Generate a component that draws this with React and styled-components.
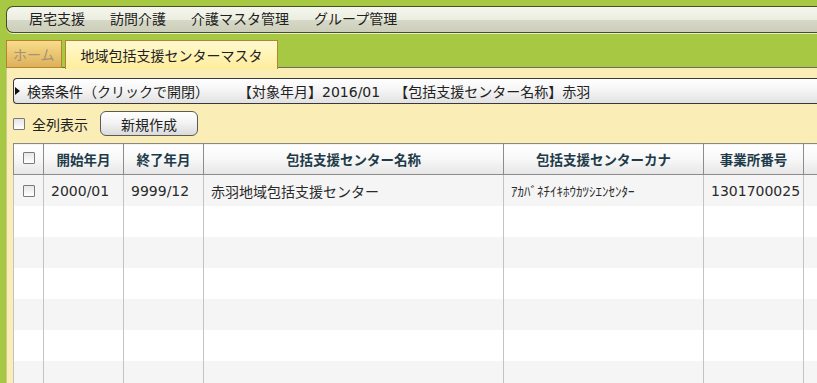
import styled, { createGlobalStyle } from "styled-components";

const GlobalStyle = createGlobalStyle`
  html, body {
    margin: 0;
    padding: 0;
    height: 383px;
    overflow: hidden;
    background: #a6c843;
  }
  body {
    font-family: "DejaVu Sans", "Noto Sans CJK JP", sans-serif;
    font-size: 14px;
    color: #222;
  }
`;

const Page = styled.div`
  width: 850px;
  padding: 6px 0 0 6px;
  display: flex;
  flex-direction: column;
`;

const MenuBar = styled.div`
  display: flex;
  align-items: center;
  height: 25px;
  padding-left: 9px;
  border: 1px solid #45521e;
  border-right: none;
  border-radius: 7px 0 0 7px;
  background: linear-gradient(#f5f6ee 0%, #eceee0 50%, #d7d9c8 52%, #ccceba 100%);
  box-shadow: 0 1px 0 #e8ecd0;
`;

const MenuItem = styled.div`
  padding: 0 12px 0 13px;
  color: #222;
  font-size: 14px;
  line-height: 25px;
`;

const TabRow = styled.div`
  display: flex;
  gap: 3px;
  margin-top: 7px;
  height: 28px;
  position: relative;
  z-index: 1;
`;

const Tab = styled.div`
  display: flex;
  align-items: center;
  padding: 0 ${(p) => (p.$active ? "14px 0 15px" : "6px")};
  border: 1px solid #b4852c;
  border-bottom: ${(p) => (p.$active ? "none" : "1px solid #b4852c")};
  height: ${(p) => (p.$active ? "28px" : "26px")};
  color: ${(p) => (p.$active ? "#222" : "#a39375")};
  background: ${(p) =>
    p.$active
      ? "linear-gradient(#fff9cf, #ffed9c)"
      : "linear-gradient(#f8dc8c, #deb05a)"};
  font-size: 14px;
`;

const Panel = styled.div`
  margin-top: -1px;
  background: #faedb6;
  border-top: 1px solid #6e6e5c;
  border-left: 1px solid #c9c98a;
  padding: 10px 0 0 6px;
  display: flex;
  flex-direction: column;
  gap: 7px;
`;

const SearchBar = styled.div`
  display: flex;
  align-items: center;
  height: 24px;
  padding-left: 1px;
  border: 1px solid #3a3a3a;
  border-right: none;
  border-radius: 4px 0 0 4px;
  background: linear-gradient(#ffffff 0%, #f4f4f4 50%, #e2e2e2 100%);
  font-size: 14px;
  white-space: nowrap;
`;

const Arrow = styled.span`
  display: inline-block;
  width: 0;
  height: 0;
  border-top: 4px solid transparent;
  border-bottom: 4px solid transparent;
  border-left: 5px solid #111;
  margin: 0 7px 0 0;
`;

const Condition = styled.span`
  margin-left: ${(p) => p.$gap || 0}px;
`;

const Toolbar = styled.div`
  display: flex;
  align-items: center;
  height: 25px;
`;

const Check = styled.span`
  display: inline-block;
  box-sizing: border-box;
  width: 12px;
  height: 12px;
  border: 1px solid #7a7a7a;
  background: linear-gradient(#e6e6e6, #ffffff);
  border-radius: 1px;
`;

const CheckLabel = styled.label`
  display: flex;
  align-items: center;
  gap: 7px;
  font-size: 14px;
`;

const Button = styled.div`
  margin-left: 12px;
  width: 96px;
  height: 23px;
  display: flex;
  align-items: center;
  justify-content: center;
  border: 1px solid #5a5a5a;
  border-radius: 6px;
  background: linear-gradient(#ffffff 0%, #f2f2f2 50%, #dadada 100%);
  font-size: 14px;
`;

const Table = styled.table`
  border-collapse: collapse;
  table-layout: fixed;
  width: 830px;
  background: #fff;
  border: 1px solid #888;
  border-right: none;
  border-bottom: none;
`;

const Th = styled.th`
  height: 30px;
  padding: 0;
  border: 1px solid #8c8c8c;
  border-top: none;
  background: linear-gradient(#ffffff 0%, #f7f7f7 50%, #e6e6e6 100%);
  color: #1e3b4a;
  font-weight: bold;
  font-size: 13.5px;
  text-align: center;
`;

const Row = styled.tr`
  background: ${(p) => (p.$odd ? "#ffffff" : "#f5f5f5")};
`;

const Td = styled.td`
  height: 31px;
  padding: 0 0 0 7px;
  border-left: 1px solid #c3c3c3;
  border-right: 1px solid #c3c3c3;
  color: #2a2a2a;
  font-size: ${(p) => (p.$kana ? "13px" : "14px")};
  white-space: nowrap;
  overflow: hidden;
`;

const CheckCell = styled(Td)`
  padding: 0;
  text-align: center;
  line-height: 0;
`;

const columns = [
  { label: "", width: 30 },
  { label: "開始年月", width: 80 },
  { label: "終了年月", width: 80 },
  { label: "包括支援センター名称", width: 300 },
  { label: "包括支援センターカナ", width: 200 },
  { label: "事業所番号", width: 100 },
  { label: "", width: 40 },
];

const rows = [
  ["2000/01", "9999/12", "赤羽地域包括支援センター", "ｱｶﾊﾞﾈﾁｲｷﾎｳｶﾂｼｴﾝｾﾝﾀｰ", "1301700025"],
  null,
  null,
  null,
  null,
  null,
  null,
];

export default function App() {
  return (
    <>
      <GlobalStyle />
      <Page>
        <MenuBar>
          <MenuItem>居宅支援</MenuItem>
          <MenuItem>訪問介護</MenuItem>
          <MenuItem>介護マスタ管理</MenuItem>
          <MenuItem>グループ管理</MenuItem>
        </MenuBar>
        <TabRow>
          <Tab>ホーム</Tab>
          <Tab $active>地域包括支援センターマスタ</Tab>
        </TabRow>
        <Panel>
          <SearchBar>
            <Arrow />
            <Condition>検索条件（クリックで開閉）</Condition>
            <Condition $gap={29}>【対象年月】2016/01</Condition>
            <Condition $gap={14}>【包括支援センター名称】赤羽</Condition>
          </SearchBar>
          <Toolbar>
            <CheckLabel>
              <Check />
              全列表示
            </CheckLabel>
            <Button>新規作成</Button>
          </Toolbar>
          <Table>
            <colgroup>
              {columns.map((c, i) => (
                <col key={i} style={{ width: c.width }} />
              ))}
            </colgroup>
            <thead>
              <tr>
                {columns.map((c, i) => (
                  <Th key={i}>{i === 0 ? <Check /> : c.label}</Th>
                ))}
              </tr>
            </thead>
            <tbody>
              {rows.map((r, i) => (
                <Row key={i} $odd={i % 2 === 1}>
                  <CheckCell>{r && <Check />}</CheckCell>
                  <Td>{r && r[0]}</Td>
                  <Td>{r && r[1]}</Td>
                  <Td>{r && r[2]}</Td>
                  <Td $kana>{r && r[3]}</Td>
                  <Td>{r && r[4]}</Td>
                  <Td />
                </Row>
              ))}
            </tbody>
          </Table>
        </Panel>
      </Page>
    </>
  );
}
